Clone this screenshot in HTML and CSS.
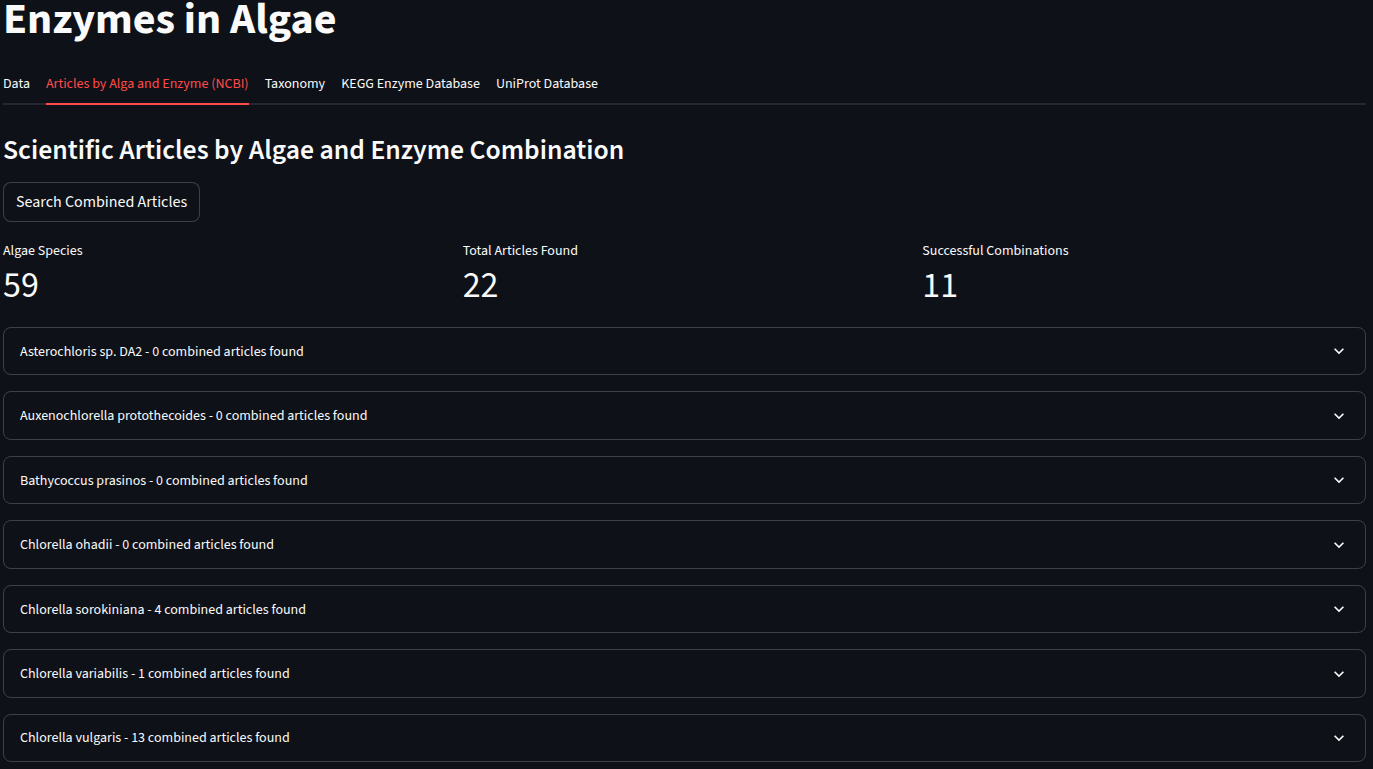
FILE: index.html
```html
<!DOCTYPE html>
<html lang="en">
<head>
<meta charset="utf-8">
<title>Enzymes in Algae</title>
<link rel="stylesheet" href="styles.css">
</head>
<body>
<main class="app">
  <h1 class="title">Enzymes in Algae</h1>
  <nav class="tabs">
    <div class="tab">Data</div>
    <div class="tab active">Articles by Alga and Enzyme (NCBI)</div>
    <div class="tab">Taxonomy</div>
    <div class="tab">KEGG Enzyme Database</div>
    <div class="tab">UniProt Database</div>
  </nav>
  <section class="panel">
    <h3 class="subheader">Scientific Articles by Algae and Enzyme Combination</h3>
    <button class="btn">Search Combined Articles</button>
    <div class="metrics">
      <div class="metric"><div class="metric-label">Algae Species</div><div class="metric-value">59</div></div>
      <div class="metric"><div class="metric-label">Total Articles Found</div><div class="metric-value">22</div></div>
      <div class="metric"><div class="metric-label">Successful Combinations</div><div class="metric-value">11</div></div>
    </div>
    <div class="expanders">
      <div class="expander"><span>Asterochloris sp. DA2 - 0 combined articles found</span><svg class="chev" viewBox="0 0 24 24"><path d="M7.41 8.59L12 13.17l4.59-4.58L18 10l-6 6-6-6 1.41-1.41z"/></svg></div>
      <div class="expander"><span>Auxenochlorella protothecoides - 0 combined articles found</span><svg class="chev" viewBox="0 0 24 24"><path d="M7.41 8.59L12 13.17l4.59-4.58L18 10l-6 6-6-6 1.41-1.41z"/></svg></div>
      <div class="expander"><span>Bathycoccus prasinos - 0 combined articles found</span><svg class="chev" viewBox="0 0 24 24"><path d="M7.41 8.59L12 13.17l4.59-4.58L18 10l-6 6-6-6 1.41-1.41z"/></svg></div>
      <div class="expander"><span>Chlorella ohadii - 0 combined articles found</span><svg class="chev" viewBox="0 0 24 24"><path d="M7.41 8.59L12 13.17l4.59-4.58L18 10l-6 6-6-6 1.41-1.41z"/></svg></div>
      <div class="expander"><span>Chlorella sorokiniana - 4 combined articles found</span><svg class="chev" viewBox="0 0 24 24"><path d="M7.41 8.59L12 13.17l4.59-4.58L18 10l-6 6-6-6 1.41-1.41z"/></svg></div>
      <div class="expander"><span>Chlorella variabilis - 1 combined articles found</span><svg class="chev" viewBox="0 0 24 24"><path d="M7.41 8.59L12 13.17l4.59-4.58L18 10l-6 6-6-6 1.41-1.41z"/></svg></div>
      <div class="expander"><span>Chlorella vulgaris - 13 combined articles found</span><svg class="chev" viewBox="0 0 24 24"><path d="M7.41 8.59L12 13.17l4.59-4.58L18 10l-6 6-6-6 1.41-1.41z"/></svg></div>
    </div>
  </section>
</main>
</body>
</html>
```
FILE: styles.css
```css
* { box-sizing: border-box; }
html, body {
  margin: 0;
  background: #0e1117;
  overflow: hidden;
}
body {
  color: #fafafa;
  font-family: "Source Sans 3", "Source Sans Pro", Lato, sans-serif;
  font-size: 16px;
}
.app {
  padding: 0 7px 0 3px;
}
.title {
  margin: -6px 0 0;
  font-size: 44px;
  font-weight: 700;
  line-height: 1.2;
}
.tabs {
  display: flex;
  gap: 16px;
  margin-top: 18px;
  border-bottom: 2px solid #262730;
}
.tab {
  height: 40px;
  display: flex;
  align-items: center;
  font-size: 14px;
  margin-bottom: -2px;
  border-bottom: 2px solid transparent;
  white-space: nowrap;
}
.tab.active {
  color: #ff4b4b;
  border-bottom-color: #ff4b4b;
}
.subheader {
  margin: 29.5px 0 0;
  font-size: 27.7px;
  font-weight: 600;
  line-height: 1.2;
}
.btn {
  display: inline-flex;
  align-items: center;
  margin-top: 14.4px;
  height: 40px;
  padding: 1px 12px 0;
  border: 1px solid rgba(250, 250, 250, 0.2);
  border-radius: 8px;
  background: #0e1117;
  color: #fafafa;
  font: inherit;
  font-size: 16px;
}
.metrics {
  display: grid;
  grid-template-columns: repeat(3, 1fr);
  gap: 16px;
  margin-top: 18.4px;
}
.metric-label {
  font-size: 14px;
  line-height: 1.6;
}
.metric-value {
  margin-top: 1.4px;
  font-size: 36px;
  line-height: 1.2;
}
.expanders {
  display: flex;
  flex-direction: column;
  gap: 16px;
  margin-top: 19.6px;
}
.expander {
  display: flex;
  align-items: center;
  justify-content: space-between;
  padding: 12.7px 16px 11.3px;
  border: 1px solid rgba(250, 250, 250, 0.2);
  border-radius: 8px;
  font-size: 14px;
  line-height: 22.5px;
}
.chev {
  width: 20px;
  height: 20px;
  margin-top: -1px;
  fill: #fafafa;
  flex: none;
}
```
